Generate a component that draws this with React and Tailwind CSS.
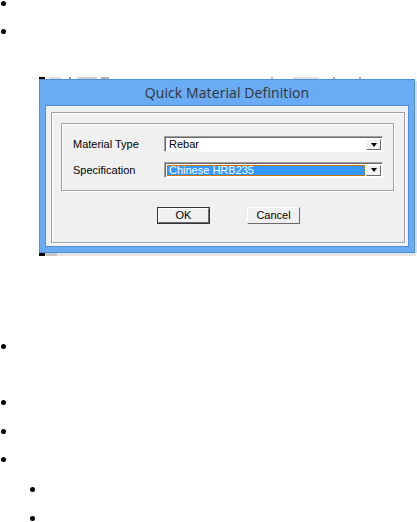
import React from 'react';

const Bullet = ({ className = '' }) => (
  <div className={`w-[5px] h-[5px] rounded-full bg-black ${className}`}></div>
);

const Combo = ({ value, selected }) => (
  <div className="w-[219px] h-[16px] flex border-t border-l border-t-[#a0a0a0] border-l-[#a0a0a0] border-b border-r border-b-white border-r-white">
    <div className="flex-1 flex border-t border-l border-t-[#696969] border-l-[#696969] bg-white p-[1px]">
      {selected ? (
        <div className="flex-1 bg-[#3399ff] border border-dotted border-[#c46d00] text-white text-[11px] leading-[11px] pl-[1px] flex items-center">
          {value}
        </div>
      ) : (
        <div className="flex-1 text-black text-[11px] leading-[11px] pl-[2px] flex items-center">{value}</div>
      )}
      <div className="w-[15px] h-full ml-[1px] bg-[#f0f0f0] border-b border-r border-b-[#696969] border-r-[#696969] border-t border-l border-t-white border-l-white flex items-center justify-center">
        <div className="w-0 h-0 border-l-[3px] border-r-[3px] border-t-[4px] border-l-transparent border-r-transparent border-t-black"></div>
      </div>
    </div>
  </div>
);

const Button = ({ label, primary }) => (
  <div className={`w-[53px] h-[17px] flex ${primary ? 'border border-[#333]' : ''}`}>
    <div className="flex-1 flex items-center justify-center bg-[#f0f0f0] border-t border-l border-t-white border-l-white border-b border-r border-b-[#696969] border-r-[#696969] text-[11px] text-black leading-none">
      {label}
    </div>
  </div>
);

const QuickMaterialDialog = () => (
  <div className="w-[379px] h-[180px] ml-[38px] flex flex-col">
    {/* cropped strip of previous picture */}
    <div className="h-[3px] w-full flex items-end bg-white">
      <div className="w-[6px] h-[2px] ml-[1px] bg-black"></div>
      <div className="w-[12px] h-[2px] ml-[4px] bg-[#dcdcdc]"></div>
      <div className="w-[2px] h-[2px] ml-[8px] bg-[#9a9a9a]"></div>
      <div className="w-[20px] h-[2px] ml-[6px] bg-[#d0d0d0]"></div>
      <div className="w-[8px] h-[2px] ml-[4px] bg-[#b0b0b0]"></div>
      <div className="w-[2px] h-[2px] ml-[162px] bg-[#bbbbbb]"></div>
      <div className="w-[26px] h-[2px] ml-[20px] bg-[#e0e0e0]"></div>
      <div className="w-[2px] h-[2px] ml-[14px] bg-[#aaa]"></div>
      <div className="w-[2px] h-[2px] ml-[24px] bg-[#aaa]"></div>
    </div>
    <div className="flex flex-1">
      <div className="w-[376px] ml-[1px] h-[174px] bg-[#6aabf5] border border-[#4f8fd6] flex flex-col">
        <div className="h-[25px] flex items-center justify-center text-[#333] text-[14px] font-['Open_Sans',sans-serif] tracking-[0.1px]">
          Quick Material Definition
        </div>
        <div className="mx-[5px] mb-[5px] flex-1 bg-[#f0f0f0] border border-[#4f8fd6] pl-[5px] pt-[6px] pr-[3px] pb-[3px] font-['Liberation_Sans',sans-serif]">
          <div className="h-full border border-[#a0a0a0] shadow-[inset_1px_1px_0_#fff,1px_1px_0_#fff] flex flex-col pt-[10px] pl-[9px] pr-[10px]">
            <div className="h-[68px] border border-[#a0a0a0] shadow-[inset_1px_1px_0_#fff,1px_1px_0_#fff] flex flex-col gap-[9px] pt-[12px] pl-[11px]">
              <div className="flex items-center">
                <div className="w-[91px] text-[11px] text-black">Material Type</div>
                <Combo value="Rebar" />
              </div>
              <div className="flex items-center">
                <div className="w-[91px] text-[11px] text-black">Specification</div>
                <Combo value="Chinese HRB235" selected />
              </div>
            </div>
            <div className="flex justify-center gap-[37px] mt-[16px] pl-[2px]">
              <Button label="OK" primary />
              <Button label="Cancel" />
            </div>
          </div>
        </div>
      </div>
      <div className="w-[2px] mt-[2px] bg-[#dcdcdc]"></div>
    </div>
    <div className="h-[3px] flex">
      <div className="w-[6px] ml-[1px] bg-black"></div>
      <div className="w-[12px] bg-[#c8c8c8]"></div>
      <div className="flex-1 bg-[#e4e4e4] mr-[1px]"></div>
    </div>
  </div>
);

export default function App() {
  return (
    <div className="w-[417px] h-[522px] bg-white overflow-hidden flex flex-col">
      <Bullet className="ml-[1px] mt-[1px]" />
      <Bullet className="ml-[1px] mt-[23px]" />
      <div className="mt-[42px]">
        <QuickMaterialDialog />
      </div>
      <Bullet className="ml-[1px] mt-[88px]" />
      <Bullet className="ml-[1px] mt-[51px]" />
      <Bullet className="ml-[1px] mt-[24px]" />
      <Bullet className="ml-[1px] mt-[23px]" />
      <Bullet className="ml-[30px] mt-[25px]" />
      <Bullet className="ml-[30px] mt-[24px]" />
    </div>
  );
}
